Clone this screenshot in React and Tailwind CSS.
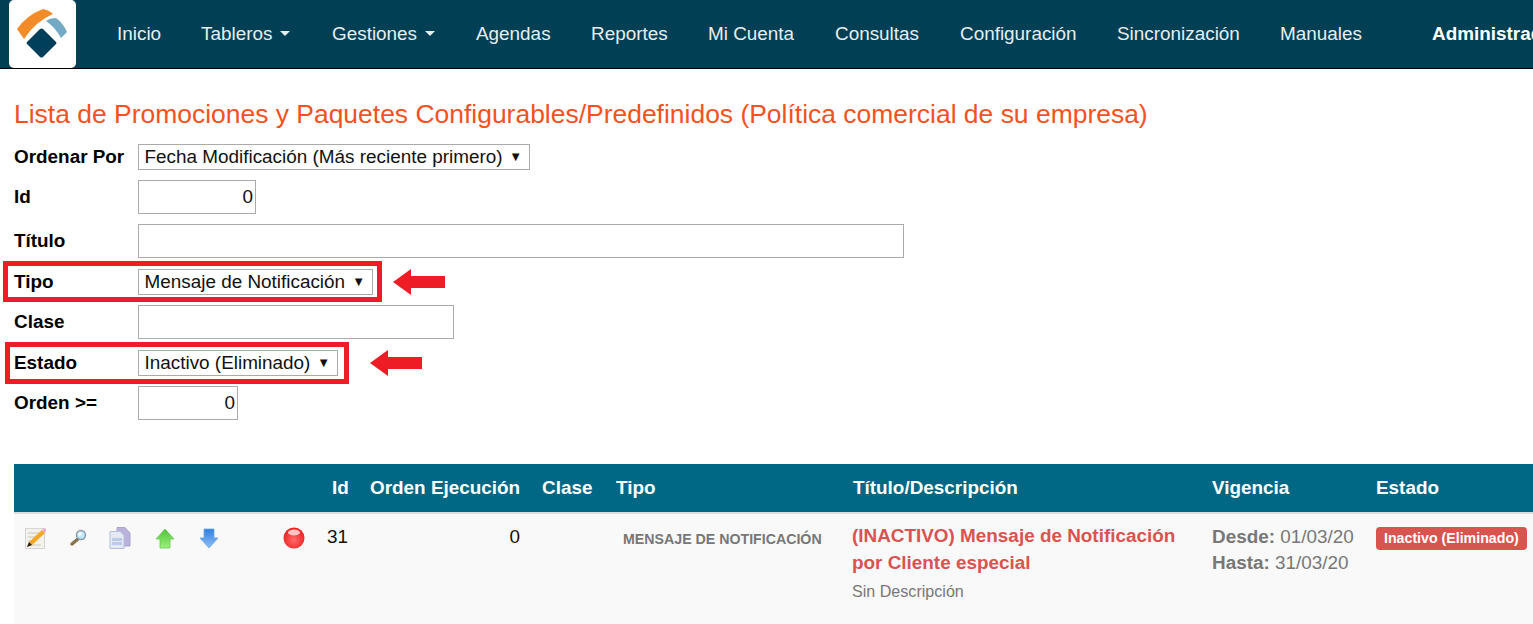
const NAV = [
  { label: 'Inicio', w: 'w-[84px]' },
  { label: 'Tableros', caret: true, w: 'w-[131px]' },
  { label: 'Gestiones', caret: true, w: 'w-[144px]' },
  { label: 'Agendas', w: 'w-[115px]' },
  { label: 'Reportes', w: 'w-[117px]' },
  { label: 'Mi Cuenta', w: 'w-[127px]' },
  { label: 'Consultas', w: 'w-[125px]' },
  { label: 'Configuración', w: 'w-[157px]' },
  { label: 'Sincronización', w: 'w-[163px]' },
  { label: 'Manuales', w: 'w-[152px]' },
]

function Logo() {
  return (
    <div className="w-[67px] h-[68px] bg-white rounded-[5px] shrink-0">
      <svg width="67" height="68" viewBox="0 0 67 68">
        <path d="M8 29 Q18 15 34 9 Q40 10 44 14 Q27 21 15 39 Z" fill="#f28c28" />
        <path d="M37 21 Q41 18 47 18 Q54 23 58 32 L52 38 Q46 27 37 21 Z" fill="#74a9c6" />
        <path d="M31 29 Q32.500 28 34 29 L47 42 Q48 43 47 44 L34 57 Q32.500 58 31 57 L18 44 Q17 43 18 42 Z" fill="#003f5c" />
      </svg>
    </div>
  )
}

function Field({ label, children, className = '' }) {
  return (
    <div className={`flex items-center ${className}`}>
      <label className="w-[124px] shrink-0 text-[18.9px] font-bold text-black">{label}</label>
      {children}
    </div>
  )
}

function Select({ value, w }) {
  return (
    <div className={`${w} h-[26px] border border-[#aaa] bg-white flex items-center justify-between pl-[5.5px] pr-[7px] text-[18.9px] text-[#111] whitespace-nowrap`}>
      <span>{value}</span>
      <span className="text-[13px]">▼</span>
    </div>
  )
}

function TextBox({ w, value = '' }) {
  return (
    <input
      readOnly
      value={value}
      className={`${w} h-[34px] border border-[#aaa] bg-white text-right pr-[2px] text-[18.9px] text-[#111]`}
    />
  )
}

function Arrow() {
  return (
    <svg width="52" height="26" viewBox="0 0 52 26">
      <path d="M0 13 L18 0 V7 H52 V19 H18 V26 Z" fill="#ee1c25" />
    </svg>
  )
}

function PencilIcon() {
  return (
    <svg width="22" height="22" viewBox="0 0 22 22">
      <rect x="0.500" y="1.500" width="19" height="20" fill="#f3f2ec" stroke="#d5d5d5" />
      <path d="M3 6h12M3 10h9M3 14h5M3 18h13" stroke="#c8c8c0" />
      <path d="M2 20 L4 15 L17 3 L20 6 L7 18 Z" fill="#f5a623" />
      <path d="M17 3 L19 1 L21 2 L21 4 L20 6 Z" fill="#f0a8d0" />
      <path d="M2 20 L4 15 L7 18 Z" fill="#222" />
    </svg>
  )
}

function SearchIcon() {
  return (
    <svg width="20" height="20" viewBox="0 0 20 20">
      <path d="M4 16 L10 11" stroke="#8a7350" strokeWidth="3.500" strokeLinecap="round" />
      <circle cx="13" cy="7" r="4.500" fill="#bfeafa" stroke="#8b9aac" strokeWidth="1.500" />
      <circle cx="12" cy="6" r="1.800" fill="#fff" />
    </svg>
  )
}

function CopyIcon() {
  return (
    <svg width="22" height="22" viewBox="0 0 22 22">
      <path d="M8 0.500 H16 L21 6 V19 H8 Z" fill="#b9b3dc" stroke="#a9a6cf" />
      <path d="M1 4.500 H11 L15 8 V21.500 H1 Z" fill="#e4e9f5" stroke="#b4bedb" />
      <rect x="3" y="11" width="10" height="7" fill="#bccae8" />
      <path d="M3 14.500h10" stroke="#e4e9f5" />
    </svg>
  )
}

function ArrowUpIcon() {
  return (
    <svg width="20" height="21" viewBox="0 0 20 21">
      <defs>
        <linearGradient id="up" x1="0" y1="0" x2="0" y2="1">
          <stop offset="0%" stopColor="#4ec23a" />
          <stop offset="100%" stopColor="#9bf07a" />
        </linearGradient>
      </defs>
      <path d="M10 1 L19 11 H15 V20 H5 V11 H1 Z" fill="url(#up)" stroke="#6cc955" strokeWidth="0.800" />
    </svg>
  )
}

function ArrowDownIcon() {
  return (
    <svg width="20" height="21" viewBox="0 0 20 21">
      <defs>
        <linearGradient id="down" x1="0" y1="0" x2="0" y2="1">
          <stop offset="0%" stopColor="#2f7fe0" />
          <stop offset="100%" stopColor="#8fc0f5" />
        </linearGradient>
      </defs>
      <path d="M10 20 L19 10 H15 V1 H5 V10 H1 Z" fill="url(#down)" stroke="#6fa6e6" strokeWidth="0.800" />
    </svg>
  )
}

function RedBall() {
  return (
    <svg width="22" height="22" viewBox="0 0 22 22">
      <defs>
        <radialGradient id="ball" cx="50%" cy="60%" r="60%">
          <stop offset="0%" stopColor="#ff6a6a" />
          <stop offset="100%" stopColor="#ee1c1c" />
        </radialGradient>
      </defs>
      <circle cx="11" cy="11" r="10.500" fill="url(#ball)" />
      <ellipse cx="11" cy="5.500" rx="6" ry="3" fill="#ffc4c4" />
    </svg>
  )
}

export default function App() {
  return (
    <div className="w-[1533px] h-[624px] overflow-hidden bg-white font-['Liberation_Sans',Arial,sans-serif]">
      {/* Navbar */}
      <nav className="h-[69px] bg-[#003f54] border-b border-black flex pl-[9px] overflow-hidden">
        <Logo />
        <ul className="flex items-center pl-[41px] text-[18.9px] text-[#e8eef0] whitespace-nowrap">
          {NAV.map(n => (
            <li key={n.label} className={`${n.w} shrink-0 flex items-center`}>
              {n.label}
              {n.caret && <span className="ml-[8px] w-0 h-0 border-x-[5px] border-x-transparent border-t-[5px] border-t-[#e8eef0]" />}
            </li>
          ))}
          <li className="font-bold text-white shrink-0">Administrador</li>
        </ul>
      </nav>

      <div className="pl-[14px]">
        <h1 className="mt-[30px] text-[26.46px] leading-[30px] text-[#f4511e] whitespace-nowrap">
          Lista de Promociones y Paquetes Configurables/Predefinidos (Política comercial de su empresa)
        </h1>

        {/* Filtros */}
        <div className="mt-[15px]">
          <Field label="Ordenar Por" className="h-[26px]">
            <Select value="Fecha Modificación (Más reciente primero)" w="w-[392px]" />
          </Field>
          <Field label="Id" className="mt-[10px] h-[34px]">
            <TextBox w="w-[118px]" value="0" />
          </Field>
          <Field label="Título" className="mt-[10px] h-[34px]">
            <TextBox w="w-[766px]" />
          </Field>
          <Field label="Tipo" className="relative mt-[11px] h-[26px]">
            <Select value="Mensaje de Notificación" w="w-[235px]" />
            <div className="absolute left-[-11px] top-[-8px] w-[379px] h-[41px] border-[5px] border-[#ee1c25]" />
            <div className="ml-[20px]"><Arrow /></div>
          </Field>
          <Field label="Clase" className="mt-[10px] h-[34px]">
            <TextBox w="w-[316px]" />
          </Field>
          <Field label="Estado" className="relative mt-[11px] h-[26px]">
            <Select value="Inactivo (Eliminado)" w="w-[200px]" />
            <div className="absolute left-[-9px] top-[-8px] w-[344px] h-[42px] border-[5px] border-[#ee1c25]" />
            <div className="ml-[32px]"><Arrow /></div>
          </Field>
          <Field label="Orden >=" className="mt-[10px] h-[34px]">
            <TextBox w="w-[100px]" value="0" />
          </Field>
        </div>

        {/* Tabla */}
        <table className="mt-[44px] w-[1519px] table-fixed border-collapse text-[18.9px]">
          <colgroup>
            <col className="w-[304px]" />
            <col className="w-[52px]" />
            <col className="w-[172px]" />
            <col className="w-[74px]" />
            <col className="w-[237px]" />
            <col className="w-[359px]" />
            <col className="w-[164px]" />
            <col />
          </colgroup>
          <thead>
            <tr className="h-[49px] bg-[#006885] border-b-2 border-[#ddd] text-white font-bold text-left">
              <th></th>
              <th className="pl-[14px]">Id</th>
              <th>Orden Ejecución</th>
              <th>Clase</th>
              <th>Tipo</th>
              <th>Título/Descripción</th>
              <th>Vigencia</th>
              <th>Estado</th>
            </tr>
          </thead>
          <tbody>
            <tr className="h-[111px] bg-[#f9f9f9] align-top">
              <td className="pt-[12px]">
                <div className="flex items-center h-[24px] pl-[11px]">
                  <PencilIcon />
                  <div className="ml-[21px]"><SearchIcon /></div>
                  <div className="ml-[21px]"><CopyIcon /></div>
                  <div className="ml-[24px]"><ArrowUpIcon /></div>
                  <div className="ml-[24px]"><ArrowDownIcon /></div>
                  <div className="ml-[64px]"><RedBall /></div>
                </div>
              </td>
              <td className="pt-[9px] pl-[9px] text-[#111]">31</td>
              <td className="pt-[9px] pr-[22px] text-right text-[#111]">0</td>
              <td></td>
              <td className="pt-[15px] pl-[7px] text-[14.2px] font-bold text-[#777] uppercase whitespace-nowrap">Mensaje de Notificación</td>
              <td className="pt-[8px]">
                <p className="-ml-px text-[#d9534f] font-bold leading-[27px] whitespace-nowrap">(INACTIVO) Mensaje de Notificación<br />por Cliente especial</p>
                <p className="-ml-px mt-[3px] text-[16.1px] text-[#777]">Sin Descripción</p>
              </td>
              <td className="pt-[10px] leading-[26px] text-[#777]">
                <p><b>Desde:</b> 01/03/20</p>
                <p><b>Hasta:</b> 31/03/20</p>
              </td>
              <td className="pt-[9px]">
                <span className="inline-block h-[23px] px-[8px] rounded-[4px] bg-[#d9534f] text-white text-[14.2px] font-bold leading-[23px] whitespace-nowrap">Inactivo (Eliminado)</span>
              </td>
            </tr>
          </tbody>
        </table>
      </div>
    </div>
  )
}
